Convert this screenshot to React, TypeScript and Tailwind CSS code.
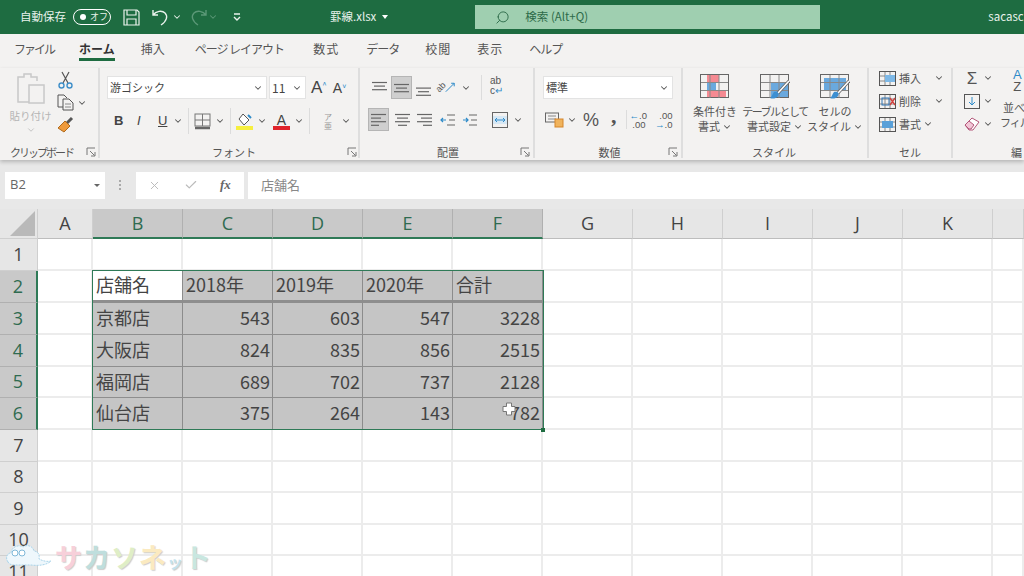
import React from "react";
import { ChevronDown, Search, X, Check } from "lucide-react";

const jp = { fontFamily: '"Noto Sans CJK JP", "Noto Sans", sans-serif' };
const latin = { fontFamily: '"Liberation Sans", sans-serif' };

const Chev = ({ className = "ml-1" }: { className?: string }) => (
  <ChevronDown className={`w-[10px] h-[10px] text-[#555] shrink-0 ${className}`} strokeWidth={2.5} />
);

const Launcher = () => (
  <svg width="10" height="10" viewBox="0 0 10 10" className="shrink-0" fill="none" stroke="#777">
    <path d="M1 8V1h8M4 4l4.5 4.5M9 5v4H5" />
  </svg>
);

const GroupLabel = ({ text, launcher = true, className = "" }: { text: string; launcher?: boolean; className?: string }) => (
  <div className={`h-[16px] translate-y-[2px] flex items-center text-[11px] text-[#555] ${className}`}>
    <span className="flex-1 text-center whitespace-nowrap">{text}</span>
    {launcher && <Launcher />}
  </div>
);

const Lines = ({ rows, cls = "" }: { rows: [number, number][]; cls?: string }) => (
  <svg width="16" height="16" viewBox="0 0 16 16" className={cls} stroke="#666" strokeWidth="1.2">
    {rows.map(([x, w], i) => (
      <line key={i} x1={x} x2={x + w} y1={2.5 + i * 3.6} y2={2.5 + i * 3.6} />
    ))}
  </svg>
);

const IndentIcon = ({ right }: { right?: boolean }) => (
  <svg width="16" height="14" viewBox="0 0 16 14" fill="none" strokeWidth="1.2">
    <path d="M7 2h8M9 7h6M7 12h8" stroke="#666" />
    <path d={right ? "M1 7h5M4 5l2 2-2 2" : "M6 7H1M3 5L1 7l2 2"} stroke="#2e8bc9" />
  </svg>
);

const StyleGridIcon = ({ kind }: { kind: number }) => (
  <svg width="30" height="25" viewBox="0 0 30 25" fill="none">
    {kind === 0 && (
      <>
        <rect x="7" y="1" width="12" height="7" fill="#f58a92" />
        <rect x="7" y="9" width="9" height="7" fill="#6aa9de" />
        <rect x="7" y="16" width="19" height="7.5" fill="#f58a92" />
      </>
    )}
    {kind === 1 && <rect x="11" y="9" width="17" height="15" fill="#6aa9de" />}
    {kind === 2 && <rect x="4" y="4" width="22" height="13" fill="#6aa9de" />}
    <rect x="0.5" y="0.5" width="28" height="23" stroke="#666" />
    <path d="M10 1v23M19 1v23M1 8.5h27M1 16.5h27" stroke="#888" />
    {kind > 0 && (
      <>
        <path d="M29 7L18 19" stroke="#666" strokeWidth="3.2" />
        <path d="M29 7L18 19" stroke="#fff" strokeWidth="1.6" />
        <path d="M14 18c3-1 6 1 4 4s-6 3-8 2c2-1 2-4 4-6z" fill="#3d8fd1" />
      </>
    )}
  </svg>
);

const CellsIcon = ({ kind }: { kind: number }) => (
  <svg width="17" height="15" viewBox="0 0 17 15" fill="none">
    <rect x="0.5" y="0.5" width="16" height="14" stroke="#555" />
    <path d="M6 1v13M11 1v13M1 5h15M1 10h15" stroke="#888" />
    {kind === 0 && <rect x="6" y="4" width="10" height="7" fill="#7db8e6" />}
    {kind === 1 && <path d="M11 4l5 7M16 4l-5 7" stroke="#d2433f" strokeWidth="1.4" />}
    {kind === 1 && <rect x="3" y="4" width="7" height="7" stroke="#2e75b6" />}
    {kind === 2 && <rect x="3" y="4" width="11" height="7" fill="#5aa0d8" />}
  </svg>
);

const Sep = () => <div className="w-px h-[26px] bg-[#dcdcdc] mx-[5px]" />;

const TopBar = () => (
  <div className="h-[34px] bg-[#1e6c41] flex items-center text-[#e9f2ec] shrink-0" style={jp}>
    <span className="ml-[20px] text-[11.5px] whitespace-nowrap">自動保存</span>
    <div className="ml-[7px] w-[38px] h-[16px] rounded-full border border-white flex items-center pl-[6px] text-[9px]">
      <span className="w-[6px] h-[6px] rounded-full bg-white mr-[4px]" />
      オフ
    </div>
    <svg width="17" height="17" viewBox="0 0 17 17" className="ml-[12px]" fill="none" stroke="#e9f2ec" strokeWidth="1.2">
      <path d="M1 1h13l2 2v13H1z" />
      <path d="M4 1v5h9V1M4 16v-6h9v6" />
    </svg>
    <svg width="17" height="18" viewBox="0 0 17 18" className="ml-[12px]" fill="none" stroke="#e9f2ec" strokeWidth="1.4">
      <path d="M1 2v5h5M1 7c3-4 9-5 12-2 3 3 2 8-4 12" />
    </svg>
    <ChevronDown className="ml-[3px] w-[10px] h-[10px]" strokeWidth={2.5} />
    <svg width="17" height="18" viewBox="0 0 17 18" className="ml-[8px]" fill="none" stroke="#5b9877" strokeWidth="1.4">
      <path d="M16 2v5h-5M16 7c-3-4-9-5-12-2-3 3-2 8 4 12" />
    </svg>
    <ChevronDown className="ml-[1px] w-[10px] h-[10px] text-[#5b9877]" strokeWidth={2.5} />
    <svg width="10" height="10" viewBox="0 0 10 10" className="ml-[14px]" fill="none" stroke="#e9f2ec" strokeWidth="1.4">
      <path d="M2 2h6M2 5l3 3 3-3" />
    </svg>
    <span className="ml-[88px] text-[11.5px] whitespace-nowrap">罫線.xlsx</span>
    <span className="ml-[6px] w-0 h-0 border-x-[3px] border-x-transparent border-t-[4px] border-t-white" />
    <div className="ml-[87px] w-[345px] h-[24px] bg-[#9fcfb0] flex items-center text-[#2d6b49]">
      <Search className="ml-[20px] w-[15px] h-[15px] -scale-x-100" strokeWidth={1.5} />
      <span className="ml-[15px] text-[11.5px]">検索 (Alt+Q)</span>
    </div>
    <span className="ml-[168px] text-[11.5px]">sacasc</span>
  </div>
);

const tabs: [string, number, number][] = [
  ["ファイル", 14, -2],
  ["ホーム", 25, 0],
  ["挿入", 26, 0],
  ["ページ レイアウト", 30, -1],
  ["数式", 29, 1],
  ["データ", 27, -1],
  ["校閲", 26, 1],
  ["表示", 26, 1],
  ["ヘルプ", 26, -1],
];

const Tabs = () => (
  <div className="h-[34px] bg-[#f3f2f1] flex items-start pt-[7px] text-[12px] leading-[16px] text-[#555] shrink-0" style={jp}>
    {tabs.map(([t, ml, ls]) => (
      <span
        key={t}
        style={{ marginLeft: ml, letterSpacing: ls }}
        className={
          t === "ホーム"
            ? "whitespace-nowrap font-bold text-[#333] border-b-[3px] border-[#1e6c41] pb-[1px]"
            : "whitespace-nowrap"
        }
      >
        {t}
      </span>
    ))}
  </div>
);

const Clipboard = () => (
  <div className="w-[100px] border-r-2 border-[#dedede] flex flex-col pl-[10px] pr-[2px]">
    <div className="flex-1 flex">
      <div className="w-[47px] flex flex-col items-center">
        <svg width="30" height="32" viewBox="0 0 30 32" fill="none" stroke="#c8c8c8" strokeWidth="1.5" className="mt-[4px] mr-[6px]">
          <path d="M14 30H2V5h6V2h7v3h6v4" />
          <rect x="13" y="13" width="15" height="18" fill="#f3f2f1" />
        </svg>
        <span className="mt-[4px] mr-[6px] text-[10.5px] text-[#b5b5b5] whitespace-nowrap">貼り付け</span>
        <ChevronDown className="mt-[1px] mr-[6px] w-[10px] h-[10px] text-[#bbb]" strokeWidth={2} />
      </div>
      <div className="flex flex-col pt-[3px] gap-[5px]">
        <svg width="17" height="18" viewBox="0 0 17 18" fill="none">
          <path d="M5 1l6 11M12 1L6 12" stroke="#555" strokeWidth="1.2" />
          <circle cx="4.5" cy="14.5" r="2.5" stroke="#3f8fc9" strokeWidth="1.4" />
          <circle cx="12.5" cy="14.5" r="2.5" stroke="#3f8fc9" strokeWidth="1.4" />
        </svg>
        <div className="flex items-center">
          <svg width="17" height="17" viewBox="0 0 17 17" fill="none" stroke="#555">
            <path d="M6 13H1V1h6l3 3" />
            <path d="M6 5h6l4 4v7H6z" fill="#f3f2f1" />
            <path d="M8 10h6M8 13h6" stroke="#888" />
          </svg>
          <Chev className="ml-[3px]" />
        </div>
        <svg width="17" height="17" viewBox="0 0 17 17" fill="none">
          <path d="M15 2L10 7" stroke="#555" strokeWidth="3" />
          <path d="M8 5l5 5-6 6-6-4z" fill="#ee9a3c" stroke="#b06a1c" />
        </svg>
      </div>
    </div>
    <div className="h-[16px] translate-y-[2px] flex items-center text-[11px] text-[#555]">
      <span className="flex-1 tracking-[-2px] whitespace-nowrap">クリップボード</span>
      <Launcher />
    </div>
  </div>
);

const Box = ({ w, text, cls = "" }: { w: number; text: string; cls?: string }) => (
  <div style={{ width: w }} className={`h-[23px] bg-white border border-[#e3e3e3] flex items-center pl-[2px] pr-[3px] text-[11px] text-[#444] ${cls}`}>
    <span className="flex-1 whitespace-nowrap">{text}</span>
    <Chev className="" />
  </div>
);

const FontGroup = () => (
  <div className="w-[260px] border-r-2 border-[#dedede] flex flex-col pl-[7px]">
    <div className="flex items-center mt-[8px]">
      <Box w={160} text="游ゴシック" />
      <Box w={37} text="11" cls="ml-[2px] text-[12px]" />
      <span className="ml-[5px] text-[17px] text-[#444] leading-none" style={latin}>A</span>
      <span className="text-[8px] text-[#2e8bc9] self-start mt-[3px]">^</span>
      <span className="ml-[6px] text-[14px] text-[#444] leading-none" style={latin}>A</span>
      <span className="text-[8px] text-[#2e8bc9] self-start mt-[3px] rotate-180">^</span>
    </div>
    <div className="flex items-center mt-[10px] ml-[7px] h-[24px] text-[#444] text-[13px]" style={latin}>
      <span className="w-[9px] font-bold">B</span>
      <span className="ml-[14px] w-[8px] italic">I</span>
      <span className="ml-[13px] w-[10px] underline">U</span>
      <Chev className="ml-[5px]" />
      <Sep />
      <svg width="17" height="17" viewBox="0 0 17 17" fill="none" stroke="#777">
        <rect x="1" y="1" width="15" height="12" />
        <path d="M8.5 1v12M1 7h15" />
        <path d="M1 15h15" stroke="#666" strokeWidth="2.5" />
      </svg>
      <Chev className="ml-[4px]" />
      <Sep />
      <svg width="17" height="17" viewBox="0 0 17 17" fill="none">
        <path d="M7 1l6 6-5 5-5-6z" stroke="#555" fill="#fff" />
        <path d="M12 2l3 3" stroke="#2e8bc9" strokeWidth="2" />
        <rect x="0" y="13" width="17" height="4" fill="#f6ef3f" />
      </svg>
      <Chev className="ml-[4px]" />
      <div className="ml-[6px] w-[17px] flex flex-col items-center leading-none">
        <span className="text-[14px] h-[13px]">A</span>
        <span className="w-[17px] h-[4px] bg-[#e0242b]" />
      </div>
      <Chev className="ml-[4px]" />
      <Sep />
      <div className="ml-[6px] w-[14px] flex flex-col items-center text-[8px] text-[#999] leading-[9px]" style={jp}>
        <span>ア</span>
        <span>亜</span>
      </div>
      <Chev className="ml-[6px]" />
    </div>
    <GroupLabel text="フォント" className="mt-auto pr-[1px] pl-[14px]" />
  </div>
);

const AlignGroup = () => (
  <div className="w-[175px] border-r-2 border-[#dedede] flex flex-col pl-[8px]">
    <div className="flex items-center mt-[8px] h-[23px]">
      <Lines rows={[[0, 15], [2, 11], [0, 15]]} cls="ml-[4px]" />
      <div className="ml-[3px] w-[21px] h-[23px] bg-[#cfcfcf] border border-[#b5b5b5] flex items-center justify-center">
        <Lines rows={[[0, 15], [2, 11], [0, 15]]} cls="translate-y-[2px]" />
      </div>
      <Lines rows={[[0, 0], [0, 15], [2, 11], [0, 15]]} cls="ml-[4px] translate-y-[2px]" />
      <div className="ml-[7px] w-[20px] h-[18px] flex items-center justify-center relative">
        <span className="text-[9px] text-[#555] -rotate-45 -translate-x-[3px] leading-none" style={latin}>ab</span>
        <svg width="13" height="13" viewBox="0 0 13 13" className="-translate-x-[4px]" fill="none" stroke="#2e8bc9" strokeWidth="1.3">
          <path d="M1 12L12 1M8 1h4v4" />
        </svg>
      </div>
      <Chev className="ml-[2px]" />
      <div className="ml-[10px] w-px h-[25px] bg-[#dcdcdc]" />
      <div className="ml-[8px] w-[16px] h-[23px] flex flex-col text-[10px] leading-[10px] text-[#555]" style={latin}>
        <span>ab</span>
        <span className="flex">
          c<span className="text-[#2e8bc9]">↵</span>
        </span>
      </div>
    </div>
    <div className="flex items-center mt-[9px] h-[23px]">
      <div className="w-[21px] h-[23px] bg-[#cfcfcf] border border-[#b5b5b5] flex items-center justify-center">
        <Lines rows={[[0, 15], [0, 10], [0, 15], [0, 8]]} />
      </div>
      <Lines rows={[[0, 15], [2, 11], [0, 15], [3, 9]]} cls="ml-[6px]" />
      <Lines rows={[[0, 15], [4, 11], [0, 15], [6, 9]]} cls="ml-[6px]" />
      <div className="ml-[7px]"><IndentIcon /></div>
      <div className="ml-[6px]"><IndentIcon right /></div>
      <svg width="16" height="16" viewBox="0 0 16 16" fill="none" className="ml-[14px]">
        <rect x="0.5" y="0.5" width="15" height="15" stroke="#666" />
        <rect x="1" y="4" width="14" height="8" fill="#d6e8f5" />
        <path d="M3 8h10M5 6L3 8l2 2M11 6l2 2-2 2" stroke="#2e8bc9" />
      </svg>
      <Chev className="ml-[5px]" />
    </div>
    <GroupLabel text="配置" className="mt-auto pr-[3px] pl-[8px]" />
  </div>
);

const NumberGroup = () => (
  <div className="w-[148px] border-r-2 border-[#dedede] flex flex-col pl-[8px]">
    <div className="mt-[8px]">
      <Box w={130} text="標準" />
    </div>
    <div className="flex items-center mt-[9px] h-[23px] text-[#555]">
      <svg width="19" height="17" viewBox="0 0 19 17" className="ml-[2px]" fill="none">
        <rect x="0.5" y="2" width="13" height="9" stroke="#666" />
        <path d="M3 5h8M3 8h8" stroke="#888" />
        <rect x="10" y="8" width="8" height="8" fill="#f0b35c" stroke="#d5852a" />
      </svg>
      <Chev className="ml-[3px]" />
      <span className="ml-[6px] text-[18px] leading-none w-[16px]" style={latin}>%</span>
      <span className="ml-[12px] text-[22px] font-bold leading-none -translate-y-[4px]" style={{ fontFamily: '"Liberation Serif", serif' }}>,</span>
      <div className="ml-[9px] w-px h-[19px] bg-[#dcdcdc]" />
      <div className="ml-[3px] w-[16px] text-[9.5px] leading-[9px] text-right" style={latin}>
        <div><span className="text-[#2e8bc9]">←</span>.0</div>
        <div>.00</div>
      </div>
      <div className="ml-[8px] w-[19px] text-[9.5px] leading-[9px] text-right" style={latin}>
        <div>.00</div>
        <div><span className="text-[#2e8bc9]">→</span>.0</div>
      </div>
    </div>
    <GroupLabel text="数値" className="mt-auto pr-[3px] pl-[8px]" />
  </div>
);

const StyleButton = ({ kind, l1, l2, w, ls = 0 }: { kind: number; l1: string; l2: string; w: number; ls?: number }) => (
  <div style={{ width: w }} className="flex flex-col items-center text-[11px] leading-[15px] text-[#555]">
    <div className="h-[31px] pt-[6px]">
      <StyleGridIcon kind={kind} />
    </div>
    <span className="mt-[5px] whitespace-nowrap" style={{ letterSpacing: ls }}>{l1}</span>
    <span className="whitespace-nowrap flex items-center">
      {l2}
      <Chev className="ml-[2px]" />
    </span>
  </div>
);

const StyleGroup = () => (
  <div className="w-[186px] border-r-2 border-[#dedede] flex flex-col pl-[5px]">
    <div className="flex">
      <StyleButton kind={0} l1="条件付き" l2="書式" w={54} />
      <StyleButton kind={1} l1="テーブルとして" l2="書式設定" w={66} ls={-1.5} />
      <StyleButton kind={2} l1="セルの" l2="スタイル" w={54} />
    </div>
    <GroupLabel text="スタイル" launcher={false} className="mt-auto pr-[7px]" />
  </div>
);

const CellsGroup = () => (
  <div className="w-[84px] border-r-2 border-[#dedede] flex flex-col pl-[10px] text-[11px] text-[#555]">
    <div className="flex flex-col mt-[2px] gap-[7px]">
      {[
        ["挿入", 0, "ml-[13px]"],
        ["削除", 1, "ml-[13px]"],
        ["書式", 2, "ml-[2px]"],
      ].map(([t, k, c]) => (
        <div key={t as string} className="flex items-center h-[16px]">
          <CellsIcon kind={k as number} />
          <span className="ml-[3px] whitespace-nowrap">{t as string}</span>
          <Chev className={c as string} />
        </div>
      ))}
    </div>
    <GroupLabel text="セル" launcher={false} className="mt-auto pr-[10px]" />
  </div>
);

const EditGroup = () => (
  <div className="flex-1 flex flex-col pl-[11px] text-[#555] overflow-hidden">
    <div className="flex">
      <div className="flex flex-col mt-[1px] gap-[5px]">
        <div className="flex items-center h-[18px]">
          <span className="w-[16px] text-[17px] leading-none text-center" style={latin}>Σ</span>
          <Chev className="ml-[3px]" />
        </div>
        <div className="flex items-center h-[18px]">
          <svg width="16" height="15" viewBox="0 0 16 15" fill="none">
            <rect x="0.5" y="0.5" width="15" height="14" stroke="#555" />
            <path d="M8 3v8M5 8l3 3 3-3" stroke="#2e8bc9" />
          </svg>
          <Chev className="ml-[3px]" />
        </div>
        <div className="flex items-center h-[18px]">
          <svg width="16" height="14" viewBox="0 0 16 14" fill="none">
            <path d="M1 8l7-7 7 4-6 8H5z" stroke="#b3577a" fill="#fff" />
            <path d="M1 8l4-4 5 4-3 4H5z" fill="#f2c6d6" stroke="#b3577a" />
          </svg>
          <Chev className="ml-[3px]" />
        </div>
      </div>
      <div className="ml-[7px] flex flex-col items-start text-[11px] leading-[15px] shrink-0">
        <div className="ml-[13px] text-[13px] leading-[12px] text-center mt-[1px]" style={latin}>
          <div className="text-[#2e8bc9]">A</div>
          <div>Z</div>
        </div>
        <span className="ml-[3px] mt-[7px] whitespace-nowrap">並べ</span>
        <span className="tracking-[-1px] whitespace-nowrap">フィル</span>
      </div>
    </div>
    <div className="mt-auto h-[16px] translate-y-[2px] flex items-center text-[11px] pl-[47px] whitespace-nowrap">編</div>
  </div>
);

const Ribbon = () => (
  <div className="h-[92px] bg-[#f3f2f1] flex pb-[2px] shadow-[0_2px_4px_rgba(0,0,0,0.22)] relative z-10 shrink-0" style={jp}>
    <Clipboard />
    <FontGroup />
    <AlignGroup />
    <NumberGroup />
    <StyleGroup />
    <CellsGroup />
    <EditGroup />
  </div>
);

const FormulaBar = () => (
  <div className="h-[49px] bg-[#e8e8e8] flex items-center pl-[5px] pt-[11px] pb-[10px] shrink-0" style={jp}>
    <div className="w-[100px] h-[27px] bg-white flex items-center pl-[5px] pr-[5px] text-[13px] text-[#666]">
      <span className="flex-1" style={{ fontFamily: '"Open Sans", sans-serif' }}>B2</span>
      <span className="w-0 h-0 border-x-[3px] border-x-transparent border-t-[3px] border-t-[#666]" />
    </div>
    <div className="ml-[14px] flex flex-col gap-[2px]">
      <span className="w-[2px] h-[2px] bg-[#aaa]" />
      <span className="w-[2px] h-[2px] bg-[#aaa]" />
      <span className="w-[2px] h-[2px] bg-[#aaa]" />
    </div>
    <div className="ml-[15px] w-[108px] h-[27px] bg-white flex items-center pl-[12px] text-[#bbb]">
      <X className="w-[13px] h-[13px]" strokeWidth={1.8} />
      <Check className="ml-[23px] w-[14px] h-[14px]" strokeWidth={2} />
      <span className="ml-[22px] text-[13px] italic font-bold text-[#666]" style={{ fontFamily: '"Liberation Serif", serif' }}>fx</span>
    </div>
    <div className="ml-[4px] flex-1 h-[27px] bg-white flex items-center pl-[13px] text-[13px] text-[#888]">店舗名</div>
  </div>
);

const colWidths = "grid-cols-[38px_55px_90px_90px_90px_90px_90px_90px_90px_90px_90px_90px_31px]";
const colNames = ["A", "B", "C", "D", "E", "F", "G", "H", "I", "J", "K", ""];
const rowHeights = [32, 32, 32, 32, 31, 32, 32, 31, 32, 31, 32, 32];

const data: Record<number, string[]> = {
  2: ["店舗名", "2018年", "2019年", "2020年", "合計"],
  3: ["京都店", "543", "603", "547", "3228"],
  4: ["大阪店", "824", "835", "856", "2515"],
  5: ["福岡店", "689", "702", "737", "2128"],
  6: ["仙台店", "375", "264", "143", "782"],
};

const selectedCol = (c: number) => c >= 1 && c <= 5;
const selectedRow = (r: number) => r >= 2 && r <= 6;

const Cell = ({ r, c }: { r: number; c: number }) => {
  const sel = selectedRow(r) && selectedCol(c);
  const active = r === 2 && c === 1;
  const val = sel ? data[r][c - 1] : "";
  const right = r > 2 && c > 1;
  const border = sel
    ? `border-r border-r-[#8c8c8c] ${r === 2 ? "border-b-[3px] border-b-[#8e8e8e]" : "border-b border-b-[#8e8e8e]"}`
    : "border-r-2 border-b-2 border-[#ececec]";
  return (
    <div
      className={`flex items-center overflow-hidden whitespace-nowrap text-[18px] text-[#444] pl-[3px] pr-[2px] pb-[2px] ${
        right ? "justify-end" : ""
      } ${active ? "bg-white" : sel ? "bg-[#c5c5c5]" : "bg-white"} ${border}`}
    >
      {val}
    </div>
  );
};

const Sheet = () => (
  <div className="relative flex-1 overflow-hidden bg-white" style={jp}>
    <div className={`grid ${colWidths} grid-rows-[30px]`}>
      <div className="bg-[#e6e6e6] border-r border-b border-[#cfcfcf] flex items-end justify-end pr-[2px] pb-[2px]">
        <div className="w-0 h-0 border-l-[25px] border-l-transparent border-b-[25px] border-b-[#b9b9b9]" />
      </div>
      {colNames.map((n, i) => (
        <div
          key={i}
          className={`flex items-center justify-center text-[18px] border-r ${
            selectedCol(i)
              ? "bg-[#c9c9c9] text-[#2f6b50] border-[#b0b0b0] border-b-2 border-b-[#2f7a57]"
              : "bg-[#e6e6e6] text-[#444] border-[#cfcfcf] border-b border-b-[#bdbdbd]"
          }`}
          style={{ fontFamily: '"Open Sans", sans-serif' }}
        >
          {n}
        </div>
      ))}
    </div>
    {rowHeights.map((h, idx) => {
      const r = idx + 1;
      return (
        <div key={r} className={`grid ${colWidths}`} style={{ height: h }}>
          <div
            className={`flex items-center justify-center text-[18px] pb-[1px] border-b ${
              selectedRow(r)
                ? "bg-[#c9c9c9] text-[#2f6b50] border-[#b0b0b0] border-r-2 border-r-[#2f7a57]"
                : "bg-[#e6e6e6] text-[#444] border-[#cfcfcf] border-r border-r-[#cfcfcf]"
            }`}
            style={{ fontFamily: '"Open Sans", sans-serif' }}
          >
            {r}
          </div>
          {colNames.map((_, c) => (
            <Cell key={c} r={r} c={c} />
          ))}
        </div>
      );
    })}
    {/* selection outline */}
    <div className="absolute left-[92px] top-[61px] w-[452px] h-[160px] border-[1.5px] border-[#2f7a57] pointer-events-none" />
    <div className="absolute left-[541px] top-[219px] w-[4px] h-[4px] bg-[#1e6c41]" />
    {/* mouse cursor */}
    <svg width="14" height="14" viewBox="0 0 14 14" className="absolute left-[502px] top-[193px]">
      <path d="M4.5 1h5v3.5H13v5H9.5V13h-5V9.5H1v-5h3.5z" fill="#fff" stroke="#777" />
    </svg>
    {/* watermark */}
    <div className="absolute left-[4px] top-[331px] flex items-center">
      <svg width="48" height="32" viewBox="0 0 48 32" fill="none">
        <path
          d="M4 22c-3-4-1-9 3-9 0-6 8-9 12-6 4-3 10-1 11 4 4 0 6 4 5 8 4 2 8 3 12 2-4 4-12 5-20 4H10c-3 0-5-1-6-3z"
          fill="#eef7fc"
          stroke="#a9d4ea"
          strokeDasharray="2 1"
        />
        <circle cx="11" cy="13" r="3" stroke="#7fb8d8" fill="#fff" />
        <circle cx="18" cy="13" r="3" stroke="#7fb8d8" fill="#fff" />
      </svg>
      <div className="ml-[3px] text-[27px] font-bold tracking-[1px] leading-none [text-shadow:1px_1px_1px_#ccc]">
        <span className="text-[#f7d0da]">サ</span>
        <span className="text-[#bfdedd]">カ</span>
        <span className="text-[#dfeec6]">ソ</span>
        <span className="text-[#fbeac0]">ネ</span>
        <span className="text-[16px] text-[#c4e2ee]">ッ</span>
        <span className="text-[#c9e7e0]">ト</span>
      </div>
    </div>
  </div>
);

export default function App() {
  return (
    <div className="w-[1024px] h-[576px] overflow-hidden flex flex-col bg-white">
      <TopBar />
      <Tabs />
      <Ribbon />
      <FormulaBar />
      <Sheet />
    </div>
  );
}
